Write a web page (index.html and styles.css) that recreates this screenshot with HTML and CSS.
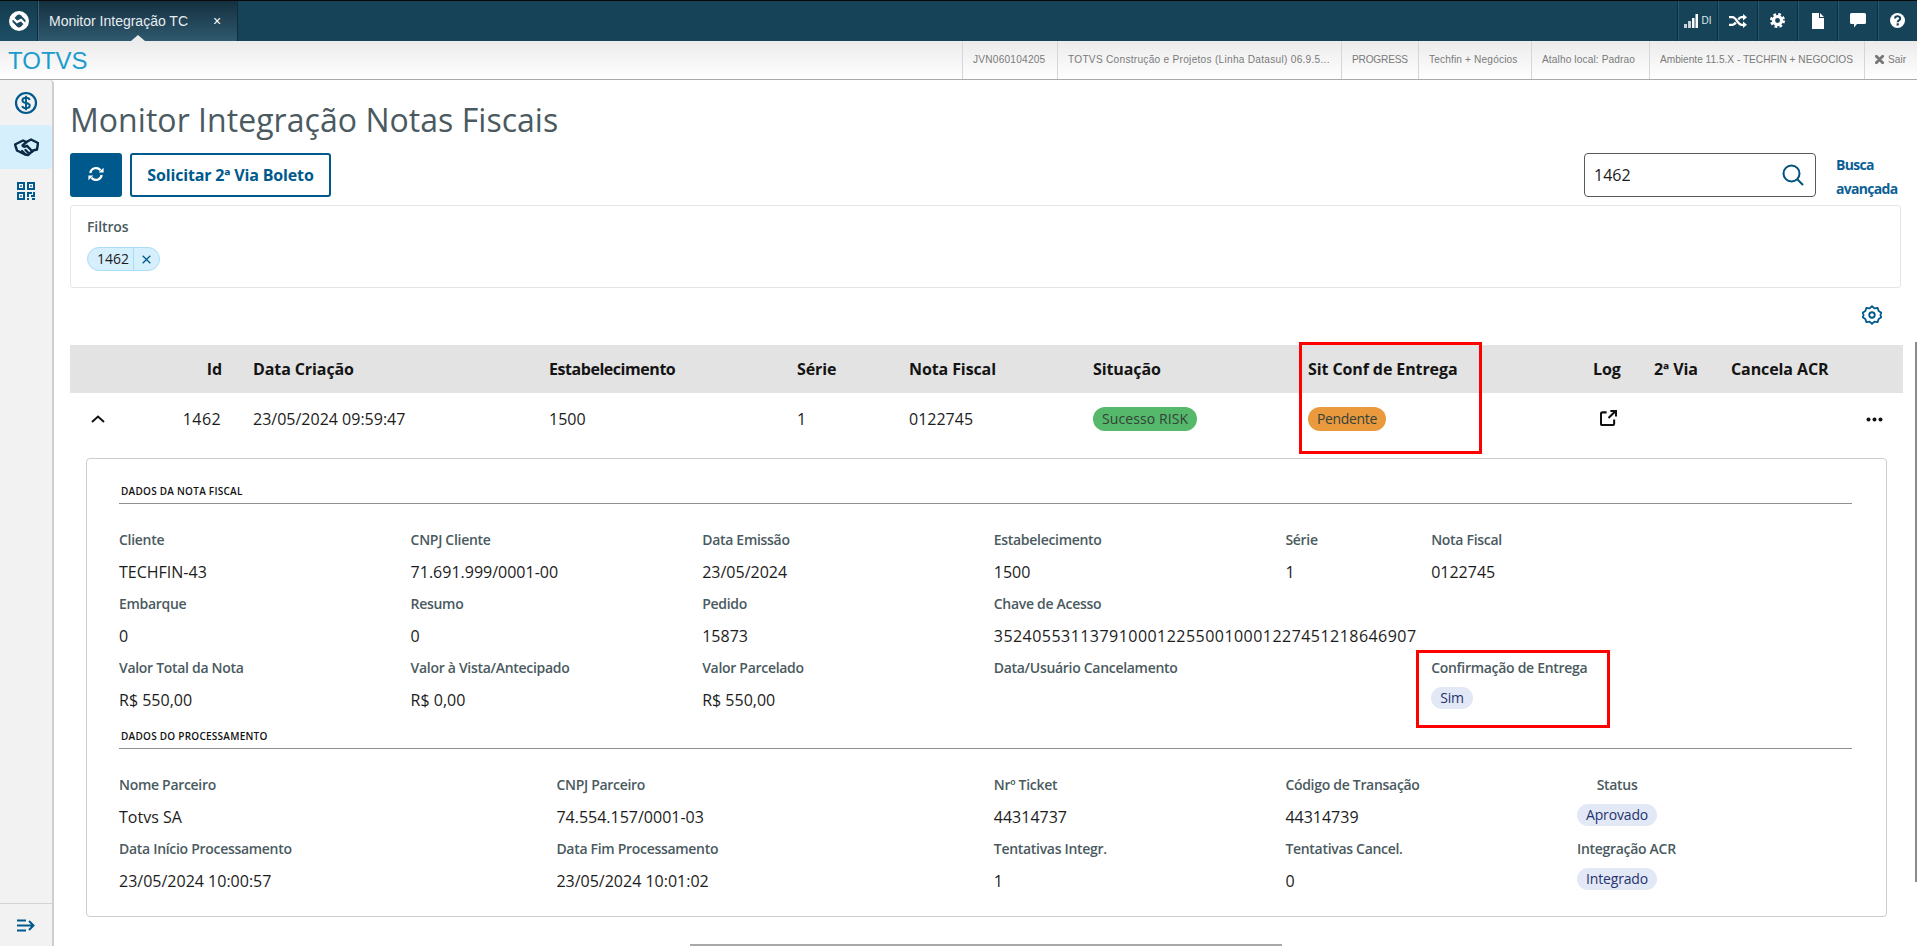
FILE: index.html
```html
<!DOCTYPE html>
<html lang="pt-BR">
<head>
<meta charset="utf-8">
<title>Monitor Integração Notas Fiscais</title>
<link rel="stylesheet" href="styles.css">
</head>
<body>
<header class="topbar">
  <div class="logo-cell">
    <svg width="22" height="22" viewBox="0 0 22 22"><circle cx="11" cy="11" r="10" fill="#fff"/><rect x="5.6" y="5.6" width="10.8" height="10.8" rx="3" fill="#1b4a5e" transform="rotate(45 11 11) "/><path d="M3 6 L9 12 L13 10 L19 16" stroke="#fff" stroke-width="2.4" fill="none"/></svg>
  </div>
  <div class="tab"><span class="tab-title">Monitor Integração TC</span><span class="tab-close">×</span><i class="tab-caret"></i></div>
  <div class="top-spacer"></div>
  <div class="top-cell">
    <svg width="14" height="14" viewBox="0 0 14 14"><path fill="#c9d2d6" d="M0 10h3v4H0zM4 7h3v7H4z"/><path fill="#fff" d="M8 4h2.500v10H8zM11.500 0H14v14h-2.500z"/></svg><span class="di">DI</span>
  </div>
  <div class="top-cell">
    <svg width="18" height="14" viewBox="0 0 18 14"><path d="M0 3.200h3.500c3.500 0 5.500 7.600 9 7.600H15M0 10.800h3.500c1.300 0 2.400-1 3.300-2.300M9.200 5.500c.9-1.300 2-2.300 3.300-2.300H15" fill="none" stroke="#fff" stroke-width="2.300"/><path fill="#fff" d="M14 0l4 3.200-4 3.200zM14 7.600l4 3.200L14 14z"/></svg>
  </div>
  <div class="top-cell">
    <svg width="15" height="15" viewBox="0 0 16 16"><circle cx="8" cy="8" r="4.300" fill="none" stroke="#fff" stroke-width="3.400"/><circle cx="8" cy="8" r="6.700" fill="none" stroke="#fff" stroke-width="2.600" stroke-dasharray="2.900 2.360"/></svg>
  </div>
  <div class="top-cell">
    <svg width="12" height="16" viewBox="0 0 12 16"><path fill="#fff" d="M0 0h7v5h5v11H0zM8 0l4 4H8z"/></svg>
  </div>
  <div class="top-cell">
    <svg width="16" height="15" viewBox="0 0 16 15"><path fill="#fff" d="M1.500 0h13A1.500 1.500 0 0 1 16 1.500v8a1.500 1.500 0 0 1-1.500 1.500H7l-3 3.500V11H1.500A1.500 1.500 0 0 1 0 9.500v-8A1.500 1.500 0 0 1 1.500 0z"/></svg>
  </div>
  <div class="top-cell">
    <svg width="15" height="15" viewBox="0 0 15 15"><circle cx="7.500" cy="7.500" r="7.500" fill="#fff"/><path d="M5 5.600c0-3.200 5.200-3.200 5.200-.1 0 1.900-2.500 1.900-2.500 3.800" fill="none" stroke="#17435a" stroke-width="2"/><rect x="6.600" y="10.300" width="2.200" height="2.200" fill="#17435a"/></svg>
  </div>
</header>

<div class="subbar">
  <div class="brand">TOTVS</div>
  <div class="sub-item si-server">JVN060104205</div>
  <div class="sub-item si-company">TOTVS Construção e Projetos (Linha Datasul) 06.9.5...</div>
  <div class="sub-item si-db">PROGRESS</div>
  <div class="sub-item si-group">Techfin + Negócios</div>
  <div class="sub-item si-local">Atalho local: Padrao</div>
  <div class="sub-item si-env">Ambiente 11.5.X - TECHFIN + NEGOCIOS</div>
  <div class="sub-item sub-exit">
    <svg width="9" height="9" viewBox="0 0 10 10"><path d="M1.500 1.500l7 7M8.500 1.500l-7 7" stroke="#777" stroke-width="3.200" stroke-linecap="round"/></svg><span>Sair</span>
  </div>
</div>

<div class="layout">
  <aside class="sidebar">
    <div class="menu-item">
      <svg width="24" height="24" viewBox="0 0 24 24" fill="none" stroke="#00598c" stroke-width="2.200"><circle cx="12" cy="12" r="10"/><path stroke-width="1.900" d="M15.700 9c-.4-1.500-1.800-2.200-3.700-2.200-2 0-3.600 1-3.600 2.600 0 3.500 7.400 1.700 7.400 5.200 0 1.600-1.700 2.600-3.800 2.600-2 0-3.400-.8-3.800-2.300M12 4.700v14.600"/></svg>
    </div>
    <div class="menu-item menu-active">
      <svg width="25" height="19" viewBox="0 0 25 19" fill="none" stroke="#0b2a44" stroke-width="2.400" stroke-linejoin="round" stroke-linecap="round"><path d="M1 6.500 9 2.500l3.500 1.500 4.500-2.500 7 3.500-1 6.500-4 1-5 4.500-3-.5L3 12.500z"/><path d="M12.500 4 8.500 7.500c1 1.500 2.500 1.500 4.500.3l5.500 5.700M11 16l-3-3M14 14.500l-2.500-2.500"/></svg>
    </div>
    <div class="menu-item">
      <svg width="18" height="18" viewBox="0 0 18 18" fill="#00598c"><path fill-rule="evenodd" d="M0 0h8v8H0zM2 2v4h4V2zM10 0h8v8h-8zM12 2v4h4V2zM0 10h8v8H0zM2 12v4h4v-4z"/><path d="M3.200 3.200h1.600v1.600H3.200zM13.200 3.200h1.600v1.600h-1.600zM3.200 13.200h1.600v1.600H3.200zM10 10h5v2h-3v3h-2zM16 10h2v5h-4v-2h2zM10 16h2v2h-2zM15 16h3v2h-3z"/></svg>
    </div>
    <div class="side-spacer"></div>
    <div class="side-foot">
      <svg width="18" height="13" viewBox="0 0 18 13" fill="none" stroke="#00598c" stroke-width="2"><path d="M0 1.500h9M0 6.500h16M0 11.500h9M12 2l4.500 4.500L12 11"/></svg>
    </div>
  </aside>

  <main class="main">
    <h1 class="page-title">Monitor Integração Notas Fiscais</h1>
    <div class="actions">
      <button class="btn-primary" type="button">
        <svg width="16" height="14" viewBox="0 0 16 14" fill="none" stroke="#fff" stroke-width="2.200"><path d="M2.300 6A5.800 5.800 0 0 1 12.500 3.200M13.700 8A5.800 5.800 0 0 1 3.500 10.800"/><path fill="#fff" stroke="none" d="M10.600 5.600h5V.8zM5.400 8.400h-5v4.800z"/></svg>
      </button>
      <button class="btn-outline" type="button">Solicitar 2ª Via Boleto</button>
      <div class="actions-spacer"></div>
      <div class="search">
        <span class="search-text">1462</span>
        <svg width="22" height="22" viewBox="0 0 22 22" fill="none" stroke="#00507c" stroke-width="2"><circle cx="9.500" cy="9.500" r="8"/><path d="M15.500 15.500l5.500 5.500"/></svg>
      </div>
      <div class="adv-search">Busca<br>avançada</div>
    </div>

    <section class="filters">
      <div class="filters-label">Filtros</div>
      <div class="chip"><span class="chip-text">1462</span><span class="chip-close"><svg width="9" height="9" viewBox="0 0 9 9"><path d="M.7.700l7.600 7.600M8.300.700.7 8.300" stroke="#00598c" stroke-width="1.300"/></svg></span></div>
    </section>

    <div class="settings-row">
      <svg width="20" height="20" viewBox="0 0 24 24" fill="none" stroke="#00598c" stroke-width="2.200" stroke-linejoin="round"><path d="M12 1.500l3 2.600 3.800-.6 1.200 3.700 3.200 2.100L22 12l1.200 2.700-3.200 2.100-1.200 3.700-3.800-.6-3 2.600-3-2.600-3.800.6L4 16.800.800 14.700 2 12 .8 9.300 4 7.200l1.200-3.700 3.800.6z"/><circle cx="12" cy="12" r="3.300"/></svg>
    </div>

    <div class="thead grid-cols">
      <div></div>
      <div class="c-id">Id</div>
      <div>Data Criação</div>
      <div class="th-tight">Estabelecimento</div>
      <div>Série</div>
      <div>Nota Fiscal</div>
      <div>Situação</div>
      <div>Sit Conf de Entrega</div>
      <div>Log</div>
      <div>2ª Via</div>
      <div>Cancela ACR</div>
    </div>
    <div class="trow grid-cols">
      <div class="c-exp"><svg width="14" height="8" viewBox="0 0 14 8" fill="none" stroke="#111" stroke-width="2"><path d="M1 7l6-5.500L13 7"/></svg></div>
      <div class="c-id num-wide">1462</div>
      <div>23/05/2024 09:59:47</div>
      <div>1500</div>
      <div>1</div>
      <div>0122745</div>
      <div><span class="tag tag-green">Sucesso RISK</span></div>
      <div><span class="tag tag-orange">Pendente</span></div>
      <div class="c-log"><svg width="17" height="16" viewBox="0 0 18 17" fill="none" stroke="#111" stroke-width="2.200"><path d="M7 2.500H2.500a1.500 1.500 0 0 0-1.500 1.500v10.500A1.500 1.500 0 0 0 2.500 16h11a1.500 1.500 0 0 0 1.500-1.500V10M9 8.500 16 1.500M11 1h6v6"/></svg></div>
      <div></div>
      <div class="c-more"><svg width="17" height="5" viewBox="0 0 17 5" fill="#111"><circle cx="2.500" cy="2.500" r="2"/><circle cx="8.500" cy="2.500" r="2"/><circle cx="14.500" cy="2.500" r="2"/></svg></div>
    </div>

    <div class="detail">
      <div class="section-head">DADOS DA NOTA FISCAL</div>
      <div class="fields">
        <div class="field s2"><div class="lbl">Cliente</div><div class="val">TECHFIN-43</div></div>
        <div class="field s2"><div class="lbl">CNPJ Cliente</div><div class="val">71.691.999/0001-00</div></div>
        <div class="field s2"><div class="lbl">Data Emissão</div><div class="val">23/05/2024</div></div>
        <div class="field s2"><div class="lbl">Estabelecimento</div><div class="val">1500</div></div>
        <div class="field s1"><div class="lbl">Série</div><div class="val">1</div></div>
        <div class="field s3"><div class="lbl">Nota Fiscal</div><div class="val">0122745</div></div>

        <div class="field s2"><div class="lbl">Embarque</div><div class="val">0</div></div>
        <div class="field s2"><div class="lbl">Resumo</div><div class="val">0</div></div>
        <div class="field s2"><div class="lbl">Pedido</div><div class="val">15873</div></div>
        <div class="field s6"><div class="lbl">Chave de Acesso</div><div class="val num-key">35240553113791000122550010001227451218646907</div></div>

        <div class="field s2"><div class="lbl">Valor Total da Nota</div><div class="val">R$ 550,00</div></div>
        <div class="field s2"><div class="lbl">Valor à Vista/Antecipado</div><div class="val">R$ 0,00</div></div>
        <div class="field s2"><div class="lbl">Valor Parcelado</div><div class="val">R$ 550,00</div></div>
        <div class="field s3"><div class="lbl">Data/Usuário Cancelamento</div></div>
        <div class="field s3"><div class="lbl">Confirmação de Entrega</div><div class="val-tag"><span class="pill">Sim</span></div></div>
      </div>

      <div class="section-head section-second">DADOS DO PROCESSAMENTO</div>
      <div class="fields fields-second">
        <div class="field s3"><div class="lbl">Nome Parceiro</div><div class="val">Totvs SA</div></div>
        <div class="field s3"><div class="lbl">CNPJ Parceiro</div><div class="val">74.554.157/0001-03</div></div>
        <div class="field s2"><div class="lbl">Nrº Ticket</div><div class="val">44314737</div></div>
        <div class="field s2"><div class="lbl">Código de Transação</div><div class="val">44314739</div></div>
        <div class="field s2"><div class="status-stack"><div class="lbl">Status</div><div class="val-tag"><span class="pill">Aprovado</span></div></div></div>

        <div class="field s3"><div class="lbl">Data Início Processamento</div><div class="val">23/05/2024 10:00:57</div></div>
        <div class="field s3"><div class="lbl">Data Fim Processamento</div><div class="val">23/05/2024 10:01:02</div></div>
        <div class="field s2"><div class="lbl">Tentativas Integr.</div><div class="val">1</div></div>
        <div class="field s2"><div class="lbl">Tentativas Cancel.</div><div class="val">0</div></div>
        <div class="field s2"><div class="lbl">Integração ACR</div><div class="val-tag"><span class="pill">Integrado</span></div></div>
      </div>
    </div>
  </main>
</div>

<div class="mark mark-a"></div>
<div class="mark mark-b"></div>
<div class="scroll-v"></div>
<div class="scroll-h"></div>
</body>
</html>
```
FILE: styles.css
```css
* { box-sizing: border-box; }
html, body { margin: 0; height: 946px; overflow: hidden; }
body { position: relative; width: 1917px; background: #fff; color: #1c1c1c; font-family: "Open Sans", "Noto Sans", sans-serif; font-size: 16px; }

.topbar { display: flex; height: 41px; background: #174358; border-top: 1px solid #0a0a0a; }
.logo-cell { width: 38px; display: flex; align-items: center; justify-content: center; background: linear-gradient(#143a4d, #1d4f66); border-right: 1px solid #0e2c3c; }
.tab { position: relative; width: 200px; display: flex; align-items: center; padding-left: 10px; background: linear-gradient(#14303f, #2f596f); border-left: 1px solid #3a6175; border-right: 1px solid #0e2c3c; color: #e8edf0; font-family: "Liberation Sans", Arial, sans-serif; font-size: 14px; }
.tab-title { width: 164px; white-space: nowrap; }
.tab-close { font-size: 14px; color: #fff; }
.tab-caret { position: absolute; left: 92px; bottom: 0; width: 0; height: 0; border-left: 7px solid transparent; border-right: 7px solid transparent; border-bottom: 6px solid #ececec; }
.top-spacer { flex: 1; }
.top-cell { width: 40px; display: flex; align-items: center; justify-content: center; gap: 4px; border-left: 1px solid #0e2c3c; box-shadow: inset 1px 0 0 #2a5a72; padding-bottom: 1px; }
.di { color: #dfe6ea; font-family: "Liberation Sans", Arial, sans-serif; font-size: 10px; }

.subbar { display: flex; height: 39px; justify-content: flex-end; background: linear-gradient(#ebebeb, #fff); border-bottom: 1px solid #a9a9a9; font-family: "Liberation Sans", Arial, sans-serif; font-size: 10.15px; color: #7a7a7a; }
.brand { margin-right: auto; padding: 5px 0 0 8px; font-size: 24px; line-height: 30px; color: #1b9ccf; }
.sub-item { display: flex; align-items: center; gap: 4px; padding: 0 0 2px 10px; border-left: 1px solid #d6d6d6; white-space: nowrap; }
.si-server { width: 95px; letter-spacing: .22px; }
.si-company { width: 284px; letter-spacing: .27px; }
.si-db { width: 77px; letter-spacing: -.2px; }
.si-group { width: 113px; letter-spacing: .15px; }
.si-local { width: 118px; letter-spacing: .12px; }
.si-env { width: 215px; }
.sub-exit { width: 53px; }

.layout { display: flex; height: 866px; }
.sidebar { width: 54px; flex: none; display: flex; flex-direction: column; padding-top: 1px; background: #f2f2f2; border-right: 2px solid #cfcfcf; border-radius: 0 4px 0 0; }
.menu-item { height: 44px; display: flex; align-items: center; justify-content: center; }
.menu-active { background: #d6effd; border-radius: 0 4px 4px 0; }
.side-spacer { flex: 1; }
.side-foot { height: 43px; display: flex; align-items: center; justify-content: center; border-top: 1px solid #d4d4d4; }

.main { flex: 1; min-width: 0; padding-left: 16px; }
.page-title { margin: 0; height: 73px; padding-top: 20px; font-size: 32px; line-height: 40px; font-weight: 400; letter-spacing: .04px; color: #4a5a60; }

.actions { display: flex; height: 44px; align-items: stretch; padding-right: 15px; }
.btn-primary { width: 52px; padding: 0; margin-right: 8px; background: #00598c; border: 0; border-radius: 3px; }
.btn-outline { width: 201px; padding: 0; background: #fff; border: 2px solid #00598c; border-radius: 3px; color: #00598c; font: 700 16px "Open Sans", sans-serif; letter-spacing: -.16px; }
.actions-spacer { flex: 1; }
.search { width: 232px; display: flex; align-items: center; justify-content: space-between; padding: 0 11px 0 9px; border: 1px solid #58595b; border-radius: 4px; }
.search-text { color: #1c1c1c; }
.adv-search { width: 66px; margin-left: 20px; font-size: 14px; line-height: 24px; font-weight: 700; letter-spacing: -.7px; color: #0c5f96; white-space: nowrap; }

.filters { height: 83px; width: 1831px; margin-top: 8px; padding: 11px 16px 0; border: 1px solid #e4e4e4; border-radius: 3px; }
.filters-label { font-size: 14px; line-height: 20px; font-weight: 600; letter-spacing: -.1px; color: #4a5a60; }
.chip { display: inline-flex; height: 24px; margin-top: 10px; background: #d6effd; border: 1px solid #a9dcf8; border-radius: 12px; font-size: 14px; }
.chip-text { width: 46px; padding-left: 9px; line-height: 21px; border-right: 1px solid #a9dcf8; }
.chip-close { width: 25px; display: flex; align-items: center; justify-content: center; }

.settings-row { height: 57px; padding: 17px 0 0 1792px; }

.grid-cols { display: grid; width: 1833px; grid-template-columns: 70px 113px 296px 248px 112px 184px 215px 285px 61px 77px 172px; align-items: center; }
.thead { height: 48px; background: #e3e3e3; font-weight: 700; letter-spacing: -.1px; color: #141414; }
.th-tight { letter-spacing: -.45px; }
.c-id { padding-right: 31px; text-align: right; }
.num-wide { padding-right: 32px; letter-spacing: .4px; }
.num-key { letter-spacing: .46px; }
.trow { height: 52px; }
.c-exp { padding: 0 0 0 21px; display: flex; }
.c-log { padding: 0 0 3px 7px; display: flex; }
.c-more { display: flex; justify-content: flex-end; padding-right: 20px; grid-column: 11; }
.tag { display: inline-block; height: 24px; padding: 0 9px; border-radius: 12px; font-size: 14px; line-height: 23px; color: #33423a; }
.tag-green { background: #55b86a; letter-spacing: .1px; }
.tag-orange { background: #ea9a3d; letter-spacing: -.35px; }

.detail { width: 1801px; height: 459px; margin: 13px 0 0 16px; padding: 24px 0 0 32px; border: 1px solid #cdcdcd; border-radius: 4px; }
.section-head { width: 1733px; height: 21px; padding-left: 2px; border-bottom: 1px solid #8f8f8f; font-size: 10px; line-height: 16px; font-weight: 600; letter-spacing: .25px; color: #111; }
.section-second { margin-top: 7px; }
.fields { display: grid; margin-top: 25px; grid-template-columns: repeat(12, 145.8px); grid-auto-rows: 64px; }
.field { min-width: 0; white-space: nowrap; }
.s1 { grid-column: span 1; }
.s2 { grid-column: span 2; }
.s3 { grid-column: span 3; }
.s6 { grid-column: span 6; }
.lbl { padding-top: 1px; font-size: 14px; line-height: 20px; font-weight: 600; letter-spacing: -.3px; color: #4a5a60; }
.val { margin-top: 12px; line-height: 20px; color: #1c1c1c; }
.val-tag { display: flex; margin-top: 9px; }
.pill { height: 22px; padding: 0 9px; border-radius: 11px; background: #e3e8f6; font-size: 14px; line-height: 21px; letter-spacing: -.15px; color: #24346f; }
.status-stack { display: flex; width: fit-content; flex-direction: column; align-items: center; }

.mark { position: absolute; border: 3px solid #ff0000; }
.mark-a { left: 1299px; top: 342px; width: 183px; height: 112px; }
.mark-b { left: 1416px; top: 650px; width: 194px; height: 78px; }
.scroll-v { position: absolute; left: 1915px; top: 342px; width: 2px; height: 540px; background: #8a8a8a; }
.scroll-h { position: absolute; left: 690px; top: 944px; width: 592px; height: 2px; background: #a8a8a8; }
```
